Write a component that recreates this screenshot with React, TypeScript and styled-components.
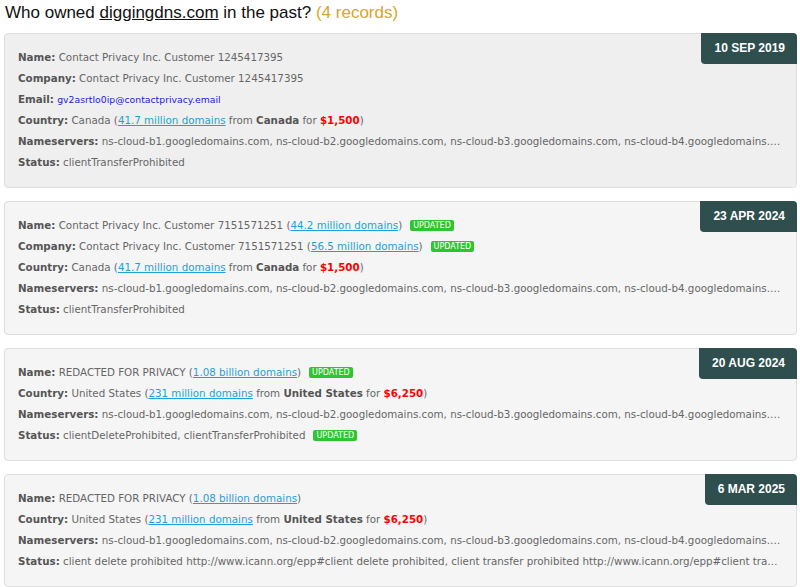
import styled, { createGlobalStyle } from 'styled-components'

const GlobalStyle = createGlobalStyle`
  body {
    margin: 0;
    background: #fff;
    font-family: 'DejaVu Sans', Verdana, sans-serif;
  }
`

const Page = styled.div`
  padding: 1px 3px 0 4px;
  width: 800px;
  box-sizing: border-box;
`

const Title = styled.h2`
  margin: 0 0 9px 1px;
  font-family: 'Liberation Sans', Arial, sans-serif;
  font-size: 17px;
  font-weight: normal;
  color: #111;
  line-height: 23px;

  a {
    color: #111;
    text-decoration: underline;
  }

  span {
    color: #d8a62b;
  }
`

const List = styled.div`
  display: flex;
  flex-direction: column;
  gap: 13px;
`

const Card = styled.div<{ $dark?: boolean }>`
  position: relative;
  background: ${(p) => (p.$dark ? '#efefef' : '#f5f5f5')};
  border: 1px solid #dedede;
  border-radius: 4px;
  padding: 13px 13px 14px 13px;
`

const DateBadge = styled.div`
  position: absolute;
  top: -1px;
  right: -1px;
  background: #2e4f4e;
  color: #fff;
  font-family: 'Liberation Sans', Arial, sans-serif;
  font-weight: bold;
  font-size: 12px;
  padding: 9px 12px 9px 13px;
  border-radius: 0 4px 0 4px;
  line-height: 13px;
`

const Row = styled.div`
  font-size: 10.3px;
  line-height: 21px;
  color: #666;
  white-space: nowrap;
  overflow: hidden;
  text-overflow: ellipsis;

  b {
    color: #555;
  }
`

const Label = styled.b`
  color: #555;
`

const Link = styled.a`
  color: #1ea0d8;
  text-decoration: underline;
`

const Email = styled.a`
  color: #1a1ae0;
  text-decoration: none;
  font-size: 9.3px;
`

const Price = styled.b`
  color: #f00 !important;
`

const Updated = styled.span`
  display: inline-block;
  margin-left: 8px;
  background: #2ec62e;
  color: #fff;
  font-size: 8px;
  line-height: 11px;
  padding: 0 3px;
  border-radius: 2px;
  vertical-align: 1px;
`

const NS =
  'ns-cloud-b1.googledomains.com, ns-cloud-b2.googledomains.com, ns-cloud-b3.googledomains.com, ns-cloud-b4.googledomains.com'

export default function App() {
  return (
    <Page>
      <GlobalStyle />
      <Title>
        Who owned <a href="#">diggingdns.com</a> in the past? <span>(4 records)</span>
      </Title>
      <List>
        <Card $dark>
          <DateBadge>10 SEP 2019</DateBadge>
          <Row>
            <Label>Name:</Label> Contact Privacy Inc. Customer 1245417395
          </Row>
          <Row>
            <Label>Company:</Label> Contact Privacy Inc. Customer 1245417395
          </Row>
          <Row>
            <Label>Email:</Label> <Email href="#">gv2asrtlo0ip@contactprivacy.email</Email>
          </Row>
          <Row>
            <Label>Country:</Label> Canada (<Link href="#">41.7 million domains</Link> from <b>Canada</b> for{' '}
            <Price>$1,500</Price>)
          </Row>
          <Row>
            <Label>Nameservers:</Label> {NS}
          </Row>
          <Row>
            <Label>Status:</Label> clientTransferProhibited
          </Row>
        </Card>

        <Card>
          <DateBadge>23 APR 2024</DateBadge>
          <Row>
            <Label>Name:</Label> Contact Privacy Inc. Customer 7151571251 (<Link href="#">44.2 million domains</Link>)
            <Updated>UPDATED</Updated>
          </Row>
          <Row>
            <Label>Company:</Label> Contact Privacy Inc. Customer 7151571251 (<Link href="#">56.5 million domains</Link>)
            <Updated>UPDATED</Updated>
          </Row>
          <Row>
            <Label>Country:</Label> Canada (<Link href="#">41.7 million domains</Link> from <b>Canada</b> for{' '}
            <Price>$1,500</Price>)
          </Row>
          <Row>
            <Label>Nameservers:</Label> {NS}
          </Row>
          <Row>
            <Label>Status:</Label> clientTransferProhibited
          </Row>
        </Card>

        <Card>
          <DateBadge>20 AUG 2024</DateBadge>
          <Row>
            <Label>Name:</Label> REDACTED FOR PRIVACY (<Link href="#">1.08 billion domains</Link>)
            <Updated>UPDATED</Updated>
          </Row>
          <Row>
            <Label>Country:</Label> United States (<Link href="#">231 million domains</Link> from <b>United States</b> for{' '}
            <Price>$6,250</Price>)
          </Row>
          <Row>
            <Label>Nameservers:</Label> {NS}
          </Row>
          <Row>
            <Label>Status:</Label> clientDeleteProhibited, clientTransferProhibited
            <Updated>UPDATED</Updated>
          </Row>
        </Card>

        <Card>
          <DateBadge>6 MAR 2025</DateBadge>
          <Row>
            <Label>Name:</Label> REDACTED FOR PRIVACY (<Link href="#">1.08 billion domains</Link>)
          </Row>
          <Row>
            <Label>Country:</Label> United States (<Link href="#">231 million domains</Link> from <b>United States</b> for{' '}
            <Price>$6,250</Price>)
          </Row>
          <Row>
            <Label>Nameservers:</Label> {NS}
          </Row>
          <Row>
            <Label>Status:</Label> client delete prohibited http://www.icann.org/epp#client delete prohibited, client
            transfer prohibited http://www.icann.org/epp#client transfer prohibited
          </Row>
        </Card>
      </List>
    </Page>
  )
}
